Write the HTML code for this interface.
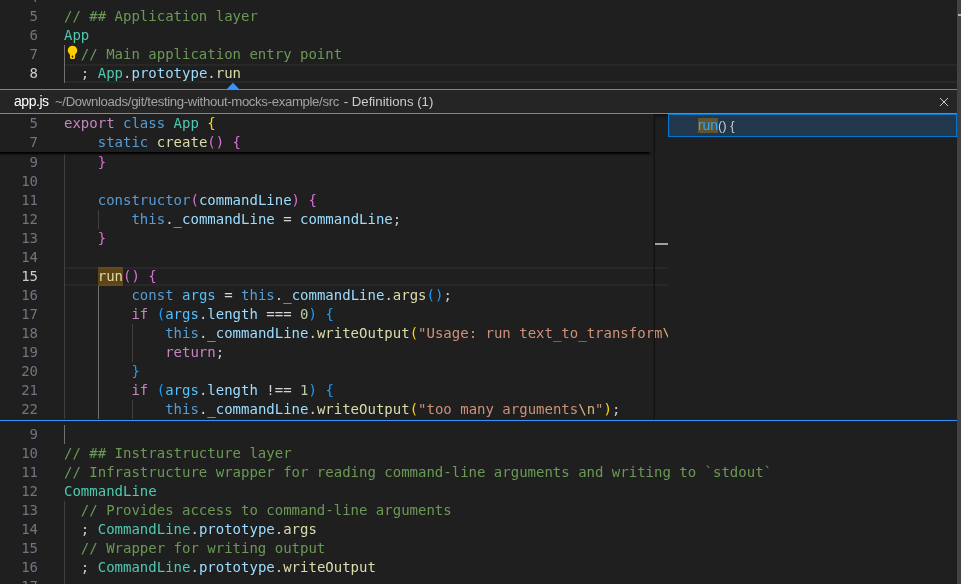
<!DOCTYPE html>
<html lang="en">
<head>
<meta charset="utf-8">
<title>app.js - Definitions (1)</title>
<style>
*{box-sizing:border-box;margin:0;padding:0}
html,body{width:961px;height:584px;overflow:hidden;background:#1f1f1f}
body{position:relative;font-family:"DejaVu Sans Mono","Liberation Mono",monospace;font-size:14px;line-height:19px;color:#cccccc}
.ln{position:absolute;left:0;width:961px;height:19px;white-space:pre}
.no{position:absolute;left:0;top:0;width:38px;text-align:right;color:#6e7681}
.no.act{color:#cccccc}
.tx{position:absolute;left:64px;top:0;white-space:pre}
.c{color:#6a9955}.t{color:#4ec9b0}.v{color:#9cdcfe}.f{color:#dcdcaa}.k{color:#569cd6}.kc{color:#c586c0}
.s{color:#ce9178}.e{color:#d7ba7d}.n{color:#b5cea8}.o{color:#d4d4d4}.cv{color:#4fc1ff}
.b1{color:#ffd700}.b2{color:#da70d6}.b3{color:#179fff}
.g{position:absolute;width:1px;background:#404040}
.g.a{background:#707070}
.hl{position:absolute;height:19px;border-top:2px solid #282828;border-bottom:2px solid #282828}
#peek{position:absolute;left:0;top:89px;width:957px;height:332px;border-top:1px solid #3794ff;border-bottom:1px solid #3794ff;background:#1f1f1f}
#head{position:absolute;left:0;top:0;width:957px;height:24px;background:#252526;border-bottom:1px solid #3794ff;font-family:"Liberation Sans",sans-serif;white-space:pre}
#head span{position:absolute;top:0;line-height:23px}
#emb{position:absolute;left:0;top:24px;width:668px;height:306px;overflow:hidden;background:#1f1f1f}
#list{position:absolute;left:668px;top:24px;width:289px;height:306px;background:#1f1f1f}
</style>
</head>
<body>
<div id="root" style="position:absolute;left:0;top:0;width:961px;height:584px;will-change:transform">
<!-- main editor, top -->
<div class="ln" style="top:-12px"><span class="no">4</span></div>
<div class="ln" style="top:7px"><span class="no">5</span><span class="tx c">// ## Application layer</span></div>
<div class="ln" style="top:26px"><span class="no">6</span><span class="tx t">App</span></div>
<div class="ln" style="top:45px"><span class="no">7</span><span class="tx c">  // Main application entry point</span></div>
<div class="hl" style="left:64px;top:64px;width:893px"></div>
<div class="ln" style="top:64px"><span class="no act">8</span><span class="tx">  ; <span class="t">App</span>.<span class="v">prototype</span>.<span class="f">run</span></span></div>
<div class="g a" style="left:64px;top:45px;height:38px"></div>
<svg style="position:absolute;left:66px;top:45px" width="14" height="16" viewBox="0 0 14 16"><path d="M6.500 0.700a4.700 4.700 0 0 1 3.300 8.050c-.55.600-.75 1.050-.75 1.700V12.600a1.500 1.500 0 0 1-1.500 1.500H5.450a1.500 1.500 0 0 1-1.500-1.500V10.450c0-.65-.2-1.100-.75-1.700A4.700 4.700 0 0 1 6.500.7z" fill="#ffcc00"/><ellipse cx="6.500" cy="11.700" rx="0.850" ry="1.150" fill="#2a2410"/></svg>
<!-- overview ruler -->
<div style="position:absolute;left:957px;top:0;width:4px;height:584px;background:#424242"></div>
<div style="position:absolute;left:958px;top:14px;width:3px;height:2px;background:#b0b0b0"></div>

<!-- arrow -->
<svg style="position:absolute;left:226px;top:82px" width="14" height="8" viewBox="0 0 14 8"><path d="M0.400 7.500L7 0.800l6.600 6.700z" fill="#3794ff"/></svg>

<div id="peek">
  <div id="head">
    <span style="left:14px;font-size:14px;letter-spacing:-0.46px;color:#ffffff" id="t1">app.js</span>
    <span style="left:55px;font-size:13.2px;letter-spacing:-0.345px;color:#a3a3a3" id="t2">~/Downloads/git/testing-without-mocks-example/src</span>
    <span style="left:340px;font-size:13.2px;letter-spacing:0.015px;color:#cccccc" id="t3"> - Definitions (1)</span>
    <svg style="position:absolute;left:939px;top:7px" width="10" height="10" viewBox="0 0 10 10"><path d="M1 1l8 8M9 1l-8 8" stroke="#cccccc" stroke-width="1" fill="none"/></svg>
  </div>
  <div id="emb">
    <div class="ln" style="top:39px"><span class="no">9</span><span class="tx">    <span class="b2">}</span></span></div>
    <div class="ln" style="top:58px"><span class="no">10</span></div>
    <div class="ln" style="top:77px"><span class="no">11</span><span class="tx">    <span class="k">constructor</span><span class="b2">(</span><span class="v">commandLine</span><span class="b2">)</span> <span class="b2">{</span></span></div>
    <div class="ln" style="top:96px"><span class="no">12</span><span class="tx">        <span class="k">this</span>.<span class="v">_commandLine</span> <span class="o">=</span> <span class="v">commandLine</span>;</span></div>
    <div class="ln" style="top:115px"><span class="no">13</span><span class="tx">    <span class="b2">}</span></span></div>
    <div class="ln" style="top:134px"><span class="no">14</span></div>
    <div class="hl" style="left:64px;top:153px;width:604px"></div>
    <div style="position:absolute;left:98px;top:153px;width:25px;height:19px;background:rgba(187,128,9,0.4)"></div>
    <div class="ln" style="top:153px"><span class="no act">15</span><span class="tx">    <span class="f">run</span><span class="b2">()</span> <span class="b2">{</span></span></div>
    <div class="ln" style="top:172px"><span class="no">16</span><span class="tx">        <span class="k">const</span> <span class="cv">args</span> <span class="o">=</span> <span class="k">this</span>.<span class="v">_commandLine</span>.<span class="f">args</span><span class="b3">()</span>;</span></div>
    <div class="ln" style="top:191px"><span class="no">17</span><span class="tx">        <span class="kc">if</span> <span class="b3">(</span><span class="cv">args</span>.<span class="v">length</span> <span class="o">===</span> <span class="n">0</span><span class="b3">)</span> <span class="b3">{</span></span></div>
    <div class="ln" style="top:210px"><span class="no">18</span><span class="tx">            <span class="k">this</span>.<span class="v">_commandLine</span>.<span class="f">writeOutput</span><span class="b1">(</span><span class="s">"Usage: run text_to_transform</span><span class="e">\n</span><span class="s">"</span><span class="b1">)</span>;</span></div>
    <div class="ln" style="top:229px"><span class="no">19</span><span class="tx">            <span class="kc">return</span>;</span></div>
    <div class="ln" style="top:248px"><span class="no">20</span><span class="tx">        <span class="b3">}</span></span></div>
    <div class="ln" style="top:267px"><span class="no">21</span><span class="tx">        <span class="kc">if</span> <span class="b3">(</span><span class="cv">args</span>.<span class="v">length</span> <span class="o">!==</span> <span class="n">1</span><span class="b3">)</span> <span class="b3">{</span></span></div>
    <div class="ln" style="top:286px"><span class="no">22</span><span class="tx">            <span class="k">this</span>.<span class="v">_commandLine</span>.<span class="f">writeOutput</span><span class="b1">(</span><span class="s">"too many arguments</span><span class="e">\n</span><span class="s">"</span><span class="b1">)</span>;</span></div>
    <!-- indent guides -->
    <div class="g" style="left:64px;top:38px;height:267px"></div>
    <div class="g" style="left:98px;top:96px;height:19px"></div>
    <div class="g a" style="left:98px;top:172px;height:133px"></div>
    <div class="g" style="left:132px;top:210px;height:38px"></div>
    <div class="g" style="left:132px;top:286px;height:19px"></div>
    <!-- sticky scroll -->
    <div style="position:absolute;left:654px;top:0;width:14px;height:6px;box-shadow:#000000 0 6px 6px -6px inset"></div>
    <div style="position:absolute;left:-6px;top:0;width:658px;height:38px;background:#1f1f1f;box-shadow:0 4px 2px -2px #000000"></div>
    <div class="ln" style="top:0"><span class="no">5</span><span class="tx"><span class="kc">export</span> <span class="k">class</span> <span class="t">App</span> <span class="b1">{</span></span></div>
    <div class="ln" style="top:19px"><span class="no">7</span><span class="tx">    <span class="k">static</span> <span class="f">create</span><span class="b2">()</span> <span class="b2">{</span></span></div>
    <!-- scrollbar / ruler -->
    <div style="position:absolute;left:653px;top:0;width:1px;height:305px;background:rgba(0,0,0,0.18)"></div>
    <div style="position:absolute;left:654px;top:0;width:1px;height:305px;background:#111112"></div>
    <div style="position:absolute;left:655px;top:129px;width:13px;height:2px;background:#a0a0a0"></div>
  </div>
  <div id="list">
    <div style="position:absolute;left:0;top:0;width:289px;height:23px;background:#23374c;border:1px solid #0078d4"></div>
    <div style="position:absolute;left:30px;top:4px;width:20px;height:15px;background:rgba(187,128,9,0.4)"></div>
    <div style="position:absolute;left:30px;top:0;line-height:23px;font-family:'Liberation Sans',sans-serif;font-size:14px;color:#cccccc;white-space:pre"><span style="color:#2aaaff;letter-spacing:-0.1px" id="r1">run</span><span id="r2" style="font-size:13px;padding-left:0.100px">() {</span></div>
  </div>
</div>

<!-- main editor, bottom -->
<div class="ln" style="top:425px"><span class="no">9</span></div>
<div class="ln" style="top:444px"><span class="no">10</span><span class="tx c">// ## Instrastructure layer</span></div>
<div class="ln" style="top:463px"><span class="no">11</span><span class="tx c">// Infrastructure wrapper for reading command-line arguments and writing to `stdout`</span></div>
<div class="ln" style="top:482px"><span class="no">12</span><span class="tx t">CommandLine</span></div>
<div class="ln" style="top:501px"><span class="no">13</span><span class="tx c">  // Provides access to command-line arguments</span></div>
<div class="ln" style="top:520px"><span class="no">14</span><span class="tx">  ; <span class="t">CommandLine</span>.<span class="v">prototype</span>.<span class="f">args</span></span></div>
<div class="ln" style="top:539px"><span class="no">15</span><span class="tx c">  // Wrapper for writing output</span></div>
<div class="ln" style="top:558px"><span class="no">16</span><span class="tx">  ; <span class="t">CommandLine</span>.<span class="v">prototype</span>.<span class="f">writeOutput</span></span></div>
<div class="ln" style="top:577px"><span class="no">17</span></div>
<div class="g a" style="left:64px;top:425px;height:19px"></div>
<div class="g" style="left:64px;top:501px;height:83px"></div>
</div>
</body>
</html>
